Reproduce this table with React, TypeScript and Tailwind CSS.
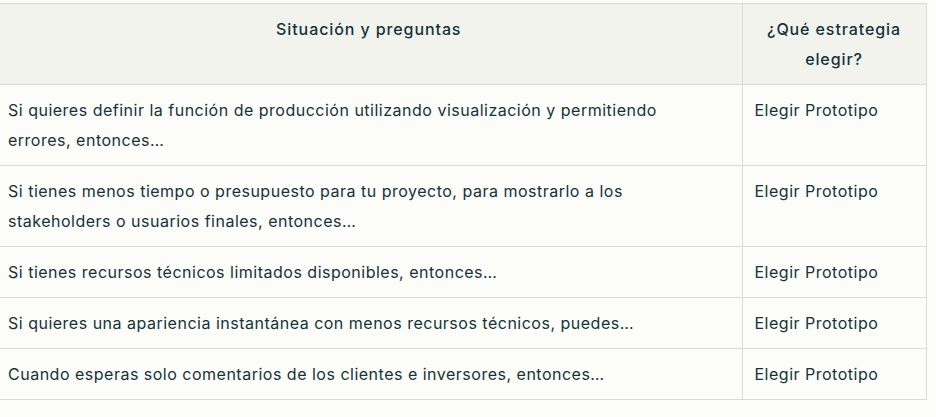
import React from "react";

const rows: [string, string][] = [
  [
    "Si quieres definir la función de producción utilizando visualización y permitiendo errores, entonces…",
    "Elegir Prototipo",
  ],
  [
    "Si tienes menos tiempo o presupuesto para tu proyecto, para mostrarlo a los stakeholders o usuarios finales, entonces…",
    "Elegir Prototipo",
  ],
  ["Si tienes recursos técnicos limitados disponibles, entonces…", "Elegir Prototipo"],
  ["Si quieres una apariencia instantánea con menos recursos técnicos, puedes…", "Elegir Prototipo"],
  ["Cuando esperas solo comentarios de los clientes e inversores, entonces…", "Elegir Prototipo"],
];

export default function App() {
  return (
    <div className="min-h-[417px] w-[936px] bg-[#fcfcf9] pt-[3px] font-['Inter',sans-serif] text-[16px] leading-[30px] tracking-[0.5px] text-[#13343b]">
      <table className="w-[926px] table-fixed border-collapse">
        <colgroup>
          <col className="w-[742px]" />
          <col className="w-[184px]" />
        </colgroup>
        <thead>
          <tr className="bg-[#f3f3ee]">
            <th className="border-y border-r border-[#dcdcd6] py-[10px] pl-[8px] pr-[12px] text-center align-top font-medium tracking-[0.9px]">
              Situación y preguntas
            </th>
            <th className="border border-[#dcdcd6] px-[12px] py-[10px] text-center align-top font-medium tracking-[0.9px]">
              ¿Qué estrategia elegir?
            </th>
          </tr>
        </thead>
        <tbody>
          {rows.map(([q, a], i) => (
            <tr key={i}>
              <td className="border-y border-r border-[#dcdcd6] py-[10px] pl-[8px] pr-[32px] text-left align-top">
                {q}
              </td>
              <td className="border border-[#dcdcd6] px-[12px] py-[10px] text-left align-top">{a}</td>
            </tr>
          ))}
        </tbody>
      </table>
    </div>
  );
}
